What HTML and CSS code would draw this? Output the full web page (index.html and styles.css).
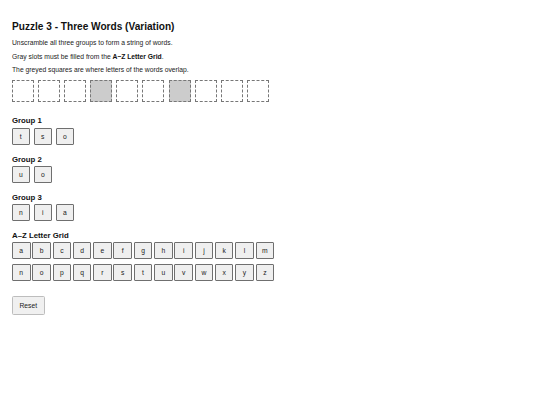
FILE: index.html
```html
<!DOCTYPE html>
<html>
<head>
<meta charset="utf-8">
<title>Puzzle 3</title>
<link rel="stylesheet" href="styles.css">
</head>
<body>
<h1 class="title">Puzzle 3 - Three Words (Variation)</h1>
<p class="info">Unscramble all three groups to form a string of words.</p>
<p class="info">Gray slots must be filled from the <b>A–Z Letter Grid</b>.</p>
<p class="info">The greyed squares are where letters of the words overlap.</p>
<div class="slots">
  <div class="slot"></div>
  <div class="slot"></div>
  <div class="slot"></div>
  <div class="slot gray"></div>
  <div class="slot"></div>
  <div class="slot"></div>
  <div class="slot gray"></div>
  <div class="slot"></div>
  <div class="slot"></div>
  <div class="slot"></div>
</div>
<div class="group first">
  <h3 class="label">Group 1</h3>
  <div class="tiles">
    <button class="tile">t</button><button class="tile">s</button><button class="tile">o</button>
  </div>
</div>
<div class="group">
  <h3 class="label">Group 2</h3>
  <div class="tiles">
    <button class="tile">u</button><button class="tile">o</button>
  </div>
</div>
<div class="group">
  <h3 class="label">Group 3</h3>
  <div class="tiles">
    <button class="tile">n</button><button class="tile">i</button><button class="tile">a</button>
  </div>
</div>
<div class="group">
  <h3 class="label">A–Z Letter Grid</h3>
  <div class="grid">
    <button class="key">a</button><button class="key">b</button><button class="key">c</button><button class="key">d</button><button class="key">e</button><button class="key">f</button><button class="key">g</button><button class="key">h</button><button class="key">i</button><button class="key">j</button><button class="key">k</button><button class="key">l</button><button class="key">m</button>
    <button class="key">n</button><button class="key">o</button><button class="key">p</button><button class="key">q</button><button class="key">r</button><button class="key">s</button><button class="key">t</button><button class="key">u</button><button class="key">v</button><button class="key">w</button><button class="key">x</button><button class="key">y</button><button class="key">z</button>
  </div>
</div>
<button class="reset">Reset</button>
</body>
</html>
```
FILE: styles.css
```css
html, body {
  background: #ffffff;
}
body {
  margin: 0;
  padding: 0 12px;
  font-family: "Liberation Sans", Arial, sans-serif;
  font-size: 6.75px;
  color: #222;
}
.title {
  font-size: 10.1px;
  font-weight: bold;
  color: #111;
  margin: 21.4px 0 6.7px;
}
.info {
  margin: 6.6px 0;
}
.info b {
  color: #111;
}
.slots {
  display: flex;
  gap: 4.1px;
}
.slot {
  box-sizing: border-box;
  width: 22px;
  height: 22px;
  border: 1px dashed #777;
  background: #fff;
}
.slot.gray {
  background: #cccccc;
}
.group {
  margin-top: 10px;
}
.group.first {
  margin-top: 14.4px;
}
.label {
  font-size: 7.8px;
  font-weight: bold;
  color: #111;
  margin: 0 0 2.3px;
}
.tiles {
  display: flex;
  gap: 4.4px;
}
.tile, .key {
  box-sizing: border-box;
  height: 17px;
  padding: 0;
  border: 1px solid #6f6f6f;
  border-radius: 1px;
  background: #efefef;
  font-family: "Liberation Sans", Arial, sans-serif;
  font-size: 6.75px;
  color: #222;
  text-align: center;
}
.tile {
  width: 17.6px;
}
.grid {
  display: grid;
  grid-template-columns: repeat(13, 18.5px);
  column-gap: 1.8px;
  row-gap: 5px;
}
.key {
  width: 18.5px;
}
.reset {
  display: block;
  box-sizing: border-box;
  margin-top: 15px;
  width: 32.5px;
  height: 18.5px;
  padding: 0;
  border: 1px solid #bdbdbd;
  border-radius: 1.5px;
  background: #f0f0f0;
  font-family: "Liberation Sans", Arial, sans-serif;
  font-size: 6.75px;
  color: #222;
}
```
